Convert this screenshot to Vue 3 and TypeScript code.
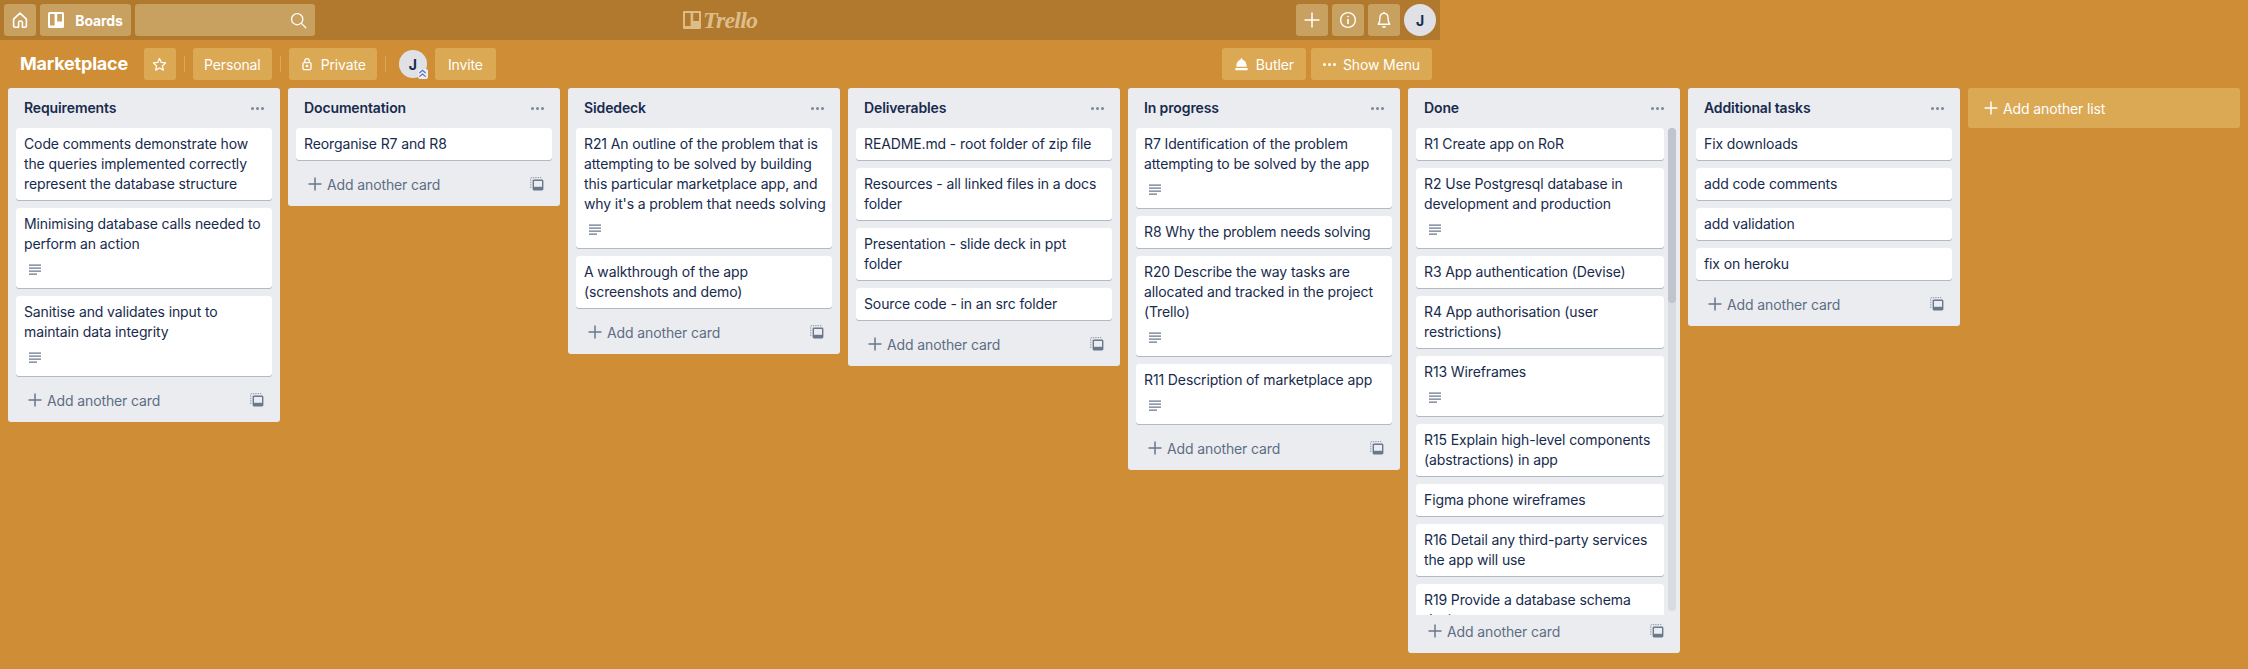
<template>
  <div class="page">
    <header class="topbar">
      <div class="topbar-side">
        <button class="top-btn square" aria-label="Home">
          <svg width="18" height="18" viewBox="0 0 18 18" fill="none" stroke="#fff" stroke-width="1.6" stroke-linejoin="round">
            <path d="M2.6 8.2 9 2.2l6.4 6v6.6a1.4 1.4 0 0 1-1.4 1.4h-2.6v-4.6a1.6 1.6 0 0 0-1.6-1.6h-.6a1.6 1.6 0 0 0-1.6 1.6v4.6H4a1.4 1.4 0 0 1-1.4-1.4z" />
          </svg>
        </button>
        <button class="top-btn boards">
          <svg width="16" height="16" viewBox="0 0 16 16">
            <path fill="#fff" fill-rule="evenodd" d="M1.5 0h13A1.5 1.5 0 0 1 16 1.5v13a1.5 1.5 0 0 1-1.5 1.5h-13A1.5 1.5 0 0 1 0 14.5v-13A1.5 1.5 0 0 1 1.5 0zM2 2v11.5h4.6V2zm7.2 0v7.5h4.8V2z" />
          </svg>
          <span>Boards</span>
        </button>
        <div class="search">
          <svg width="17" height="17" viewBox="0 0 17 17" fill="none" stroke="#fff" stroke-width="1.3" stroke-linecap="round">
            <circle cx="7.2" cy="7.2" r="5.6" />
            <path d="m11.4 11.4 4.4 4.4" />
          </svg>
        </div>
      </div>
      <div class="logo">
        <svg width="18" height="18" viewBox="0 0 18 18">
          <path fill="currentColor" fill-rule="evenodd" d="M1 0h16a1 1 0 0 1 1 1v16a1 1 0 0 1-1 1H1a1 1 0 0 1-1-1V1a1 1 0 0 1 1-1zM2 2v13h5.6V2zm8.2 0v8H16V2z" />
        </svg>
        <span>Trello</span>
      </div>
      <div class="topbar-side">
        <button class="top-btn square" aria-label="Create">
          <svg width="18" height="18" viewBox="0 0 18 18" stroke="#fff" stroke-width="1.5" stroke-linecap="round">
            <path d="M9 2v14M2 9h14" />
          </svg>
        </button>
        <button class="top-btn square" aria-label="Info">
          <svg width="18" height="18" viewBox="0 0 18 18" fill="none" stroke="#fff" stroke-width="1.4">
            <circle cx="9" cy="9" r="7.4" />
            <path d="M9 8v5" stroke-width="1.6" />
            <path d="M9 4.9v1.3" stroke-width="1.6" />
          </svg>
        </button>
        <button class="top-btn square" aria-label="Notifications">
          <svg width="18" height="18" viewBox="0 0 18 18" fill="none" stroke="#fff" stroke-width="1.4" stroke-linejoin="round">
            <path d="M9 2.2c-2.6 0-4 1.9-4 4.4 0 3.4-.4 5-1.7 6.6h11.4C13.4 11.6 13 10 13 6.6c0-2.5-1.4-4.4-4-4.4z" />
            <path d="M7.4 15.4c.8.7 2.4.7 3.2 0" />
            <path d="M9 1v1.2" />
          </svg>
        </button>
        <div class="avatar big">J</div>
      </div>
    </header>

    <section class="board-header">
      <div class="board-side">
        <h1 class="board-title">Marketplace</h1>
        <button class="board-btn square" aria-label="Star">
          <svg width="15" height="15" viewBox="0 0 16 16" fill="none" stroke="#fff" stroke-width="1.3" stroke-linejoin="round">
            <path d="m8 1.6 1.95 4.2 4.55.55-3.35 3.1.88 4.55L8 11.75 3.97 14l.88-4.55L1.5 6.35l4.55-.55z" />
          </svg>
        </button>
        <span class="divider"></span>
        <button class="board-btn">Personal</button>
        <span class="divider"></span>
        <button class="board-btn">
          <svg width="14" height="14" viewBox="0 0 14 14" fill="none" stroke="#fff" stroke-width="1.3">
            <rect x="3" y="5.6" width="8" height="7" rx="1" />
            <path d="M4.8 5.6V3.8a2.2 2.2 0 0 1 4.4 0v1.8" />
            <circle cx="7" cy="9" r=".7" fill="#fff" />
          </svg>
          <span class="with-icon">Private</span>
        </button>
        <span class="divider"></span>
        <div class="member">
          <div class="avatar">J</div>
          <span class="admin-badge">
            <svg width="9" height="9" viewBox="0 0 10 10" fill="none" stroke="#5a6fc4" stroke-width="1.3">
              <path d="m1.5 4.5 3.5-3 3.5 3M1.5 8.5l3.5-3 3.5 3" />
            </svg>
          </span>
        </div>
        <button class="board-btn invite">Invite</button>
      </div>
      <div class="board-side right">
        <button class="board-btn">
          <svg width="15" height="15" viewBox="0 0 16 16" fill="#fff">
            <path d="M8 1.4a1 1 0 0 1 .9 1.4C11.8 3.3 13.4 6.4 13.6 10.4H2.4C2.6 6.4 4.2 3.3 7.1 2.8A1 1 0 0 1 8 1.4z" />
            <rect x="1.4" y="11.6" width="13.2" height="2.4" rx=".6" />
          </svg>
          <span class="with-icon">Butler</span>
        </button>
        <button class="board-btn">
          <span class="menu-dots">
            <i></i><i></i><i></i>
          </span>
          <span class="with-icon">Show Menu</span>
        </button>
      </div>
    </section>

    <main class="lists">
      <div v-for="list in lists" :key="list.title" class="list" :class="{ scroller: list.scroll }">
        <div class="list-head">
          <h2>{{ list.title }}</h2>
          <span class="menu-dots grey">
            <i></i><i></i><i></i>
          </span>
        </div>
        <div class="cards">
          <div v-for="card in list.cards" :key="card.text" class="card">
            <div class="card-text">{{ card.text }}</div>
            <div v-if="card.desc" class="badge">
              <svg width="14" height="14" viewBox="0 0 14 14" stroke="#6b778c" stroke-width="1.2">
                <path d="M1 2.2h12M1 5.2h12M1 8.2h12M1 11.2h8" />
              </svg>
            </div>
          </div>
          <div v-if="list.scroll" class="scrollbar"><div class="thumb"></div></div>
        </div>
        <div class="list-foot">
          <span class="add-card">
            <svg width="14" height="14" viewBox="0 0 14 14" stroke="#6b778c" stroke-width="1.5">
              <path d="M7 .5v13M.5 7h13" />
            </svg>
            Add another card
          </span>
          <svg width="14" height="14" viewBox="0 0 14 14" fill="none">
            <path stroke="#8993a4" stroke-width="1" stroke-dasharray="1.4 1" d="M.8 11V1.2a.5.5 0 0 1 .5-.5h10" />
            <rect x="2.6" y="2.6" width="10.8" height="10.8" rx="1.4" fill="#6b778c" />
            <rect x="4" y="4" width="8" height="5.8" fill="#ebecf0" />
          </svg>
        </div>
      </div>
      <div class="add-list">
        <svg width="14" height="14" viewBox="0 0 14 14" stroke="#fff" stroke-width="1.5">
          <path d="M7 .5v13M.5 7h13" />
        </svg>
        Add another list
      </div>
    </main>
  </div>
</template>

<script setup lang="ts">
interface Card {
  text: string;
  desc?: boolean;
}

interface List {
  title: string;
  cards: Card[];
  scroll?: boolean;
}

const lists: List[] = [
  {
    title: 'Requirements',
    cards: [
      { text: 'Code comments demonstrate how the queries implemented correctly represent the database structure' },
      { text: 'Minimising database calls needed to perform an action', desc: true },
      { text: 'Sanitise and validates input to maintain data integrity', desc: true },
    ],
  },
  {
    title: 'Documentation',
    cards: [{ text: 'Reorganise R7 and R8' }],
  },
  {
    title: 'Sidedeck',
    cards: [
      {
        text: "R21 An outline of the problem that is attempting to be solved by building this particular marketplace app, and why it's a problem that needs solving",
        desc: true,
      },
      { text: 'A walkthrough of the app (screenshots and demo)' },
    ],
  },
  {
    title: 'Deliverables',
    cards: [
      { text: 'README.md - root folder of zip file' },
      { text: 'Resources - all linked files in a docs folder' },
      { text: 'Presentation - slide deck in ppt folder' },
      { text: 'Source code - in an src folder' },
    ],
  },
  {
    title: 'In progress',
    cards: [
      { text: 'R7 Identification of the problem attempting to be solved by the app', desc: true },
      { text: 'R8 Why the problem needs solving' },
      { text: 'R20 Describe the way tasks are allocated and tracked in the project (Trello)', desc: true },
      { text: 'R11 Description of marketplace app', desc: true },
    ],
  },
  {
    title: 'Done',
    scroll: true,
    cards: [
      { text: 'R1 Create app on RoR' },
      { text: 'R2 Use Postgresql database in development and production', desc: true },
      { text: 'R3 App authentication (Devise)' },
      { text: 'R4 App authorisation (user restrictions)' },
      { text: 'R13 Wireframes', desc: true },
      { text: 'R15 Explain high-level components (abstractions) in app' },
      { text: 'Figma phone wireframes' },
      { text: 'R16 Detail any third-party services the app will use' },
      { text: 'R19 Provide a database schema design' },
    ],
  },
  {
    title: 'Additional tasks',
    cards: [
      { text: 'Fix downloads' },
      { text: 'add code comments' },
      { text: 'add validation' },
      { text: 'fix on heroku' },
    ],
  },
];
</script>

<style>
html,
body {
  margin: 0;
  background: #cf8e35;
}
</style>

<style scoped>
.page {
  width: 2248px;
  height: 669px;
  overflow: hidden;
  background: #cf8e35;
  font-family: Inter, "Liberation Sans", sans-serif;
  font-size: 14px;
  letter-spacing: -0.12px;
  color: #172b4d;
}

button {
  font: inherit;
  letter-spacing: inherit;
  border: none;
  color: #fff;
  padding: 0;
}

.topbar {
  width: 1440px;
  height: 40px;
  box-sizing: border-box;
  padding: 4px;
  background: #b0792d;
  display: flex;
  justify-content: space-between;
  align-items: center;
  position: relative;
}

.topbar-side {
  display: flex;
  gap: 4px;
  align-items: center;
}

.top-btn {
  height: 32px;
  border-radius: 3px;
  background: #c8a05f;
  display: flex;
  align-items: center;
  justify-content: center;
}

.square {
  width: 32px;
}

.boards {
  width: 91px;
  gap: 11px;
  font-weight: 700;
}

.search {
  width: 180px;
  height: 32px;
  border-radius: 3px;
  background: #c8a05f;
  display: flex;
  align-items: center;
  justify-content: flex-end;
  padding-right: 8px;
  box-sizing: border-box;
}

.logo {
  position: absolute;
  left: 683px;
  top: 6px;
  height: 28px;
  display: flex;
  align-items: center;
  gap: 2px;
  color: #dcbd8a;
  font-family: "Liberation Serif", serif;
  font-style: italic;
  font-weight: 700;
  font-size: 24px;
  letter-spacing: -0.8px;
}

.avatar {
  width: 28px;
  height: 28px;
  border-radius: 50%;
  background: #dfe1e6;
  color: #172b4d;
  font-size: 14px;
  font-weight: 700;
  display: flex;
  align-items: center;
  justify-content: center;
}

.avatar.big {
  width: 32px;
  height: 32px;
}

.board-header {
  width: 1440px;
  height: 48px;
  box-sizing: border-box;
  padding: 8px 8px 8px 20px;
  display: flex;
  justify-content: space-between;
}

.board-side {
  display: flex;
  align-items: center;
}

.board-side.right {
  gap: 5px;
}

.board-title {
  margin: 0 16px 0 0;
  font-size: 18px;
  line-height: 32px;
  font-weight: 700;
  letter-spacing: -0.2px;
  color: #fff;
}

.board-btn {
  height: 32px;
  padding: 0 11px;
  border-radius: 3px;
  background: #dba854;
  display: flex;
  align-items: center;
}

.right .board-btn {
  padding: 0 12px;
}

.board-btn.invite {
  padding: 0 13px;
}

.board-btn.square {
  width: 32px;
  padding: 0;
  justify-content: center;
}

.with-icon {
  margin-left: 7px;
}

.divider {
  width: 1px;
  height: 16px;
  margin: 0 8px;
  background: #dba854;
}

.member {
  position: relative;
  margin: 0 8px 0 5px;
}

.admin-badge {
  position: absolute;
  right: -1px;
  bottom: -1px;
  width: 10px;
  height: 10px;
  border-radius: 2px;
  background: #ebecf0;
  display: flex;
}

.menu-dots {
  display: inline-flex;
  gap: 2px;
}

.menu-dots i {
  width: 3px;
  height: 3px;
  border-radius: 50%;
  background: #fff;
}

.menu-dots.grey i {
  background: #7a869a;
}

.lists {
  display: flex;
  align-items: flex-start;
  gap: 8px;
  padding: 0 8px;
}

.list {
  width: 272px;
  flex: none;
  background: #ebecf0;
  border-radius: 3px;
  display: flex;
  flex-direction: column;
}

.list-head {
  height: 40px;
  padding: 0 16px;
  display: flex;
  align-items: center;
  justify-content: space-between;
}

.list-head h2 {
  margin: 0;
  font-size: 14px;
  font-weight: 600;
  line-height: 20px;
}

.cards {
  display: flex;
  flex-direction: column;
  gap: 8px;
  padding: 0 8px;
  position: relative;
}

.scroller .cards {
  height: 487px;
  overflow: hidden;
  padding-right: 16px;
}

.card {
  flex: none;
  background: #fff;
  border-radius: 3px;
  box-shadow: 0 1px 0 rgba(9, 30, 66, 0.25);
  padding: 6px 6px 6px 8px;
}

.card-text {
  line-height: 20px;
}

.badge {
  height: 28px;
  padding: 4px 0 0 4px;
  box-sizing: border-box;
  display: flex;
  align-items: center;
}

.scrollbar {
  position: absolute;
  top: 0;
  right: 4px;
  bottom: 4px;
  width: 8px;
  border-radius: 4px;
  background: #d9dbe3;
}

.thumb {
  height: 175px;
  border-radius: 4px;
  background: #bfc4ce;
}

.list-foot {
  height: 42px;
  box-sizing: border-box;
  margin-top: 4px;
  padding: 0 16px 2px 20px;
  display: flex;
  align-items: center;
  justify-content: space-between;
  color: #5e6c84;
}

.scroller .list-foot {
  height: 38px;
  margin-top: 0;
  padding-bottom: 6px;
}

.add-card {
  display: flex;
  align-items: center;
  gap: 5px;
}

.add-list {
  width: 272px;
  height: 40px;
  flex: none;
  box-sizing: border-box;
  padding: 0 16px;
  background: #dba854;
  border-radius: 3px;
  color: #fff;
  display: flex;
  align-items: center;
  gap: 5px;
}
</style>
